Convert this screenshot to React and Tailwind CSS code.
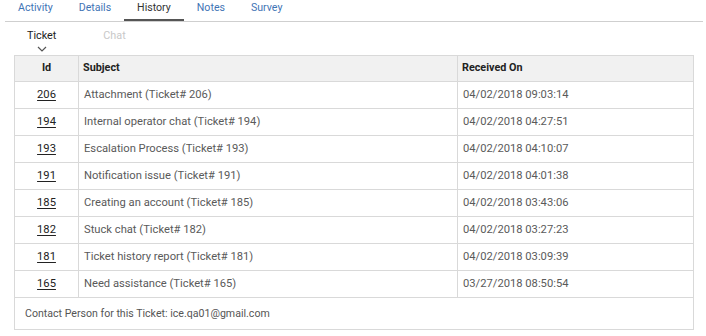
import React from 'react'

const tabs = ['Activity', 'Details', 'History', 'Notes', 'Survey'];

const rows = [
  { id: '206', subject: 'Attachment (Ticket# 206)', received: '04/02/2018 09:03:14' },
  { id: '194', subject: 'Internal operator chat (Ticket# 194)', received: '04/02/2018 04:27:51' },
  { id: '193', subject: 'Escalation Process (Ticket# 193)', received: '04/02/2018 04:10:07' },
  { id: '191', subject: 'Notification issue (Ticket# 191)', received: '04/02/2018 04:01:38' },
  { id: '185', subject: 'Creating an account (Ticket# 185)', received: '04/02/2018 03:43:06' },
  { id: '182', subject: 'Stuck chat (Ticket# 182)', received: '04/02/2018 03:27:23' },
  { id: '181', subject: 'Ticket history report (Ticket# 181)', received: '04/02/2018 03:09:39' },
  { id: '165', subject: 'Need assistance (Ticket# 165)', received: '03/27/2018 08:50:54' },
];

function App() {
  return (
    <div className="w-[706px] h-[336px] bg-white font-['Roboto',sans-serif] overflow-hidden">
      <div className="ml-[5px] mr-[3px] flex border-b border-[#cfcfcf]">
        {tabs.map((tab) => {
          const active = tab === 'History';
          return (
            <div
              key={tab}
              className={`h-[21px] px-[13px] text-[10.6px] leading-[16px] ${active ? 'border-b-2 border-[#555] text-[#333]' : 'text-[#3f74b5]'}`}
            >
              {tab}
            </div>
          );
        })}
      </div>

      <div className="flex h-[33px] text-[10.8px] leading-[14px]">
        <div className="ml-[27px] mt-[7px] flex flex-col items-center text-[#222]">
          <span>Ticket</span>
          <svg width="10" height="6" viewBox="0 0 10 6" className="mt-[3px]">
            <path d="M1 1 L5 5 L9 1" fill="none" stroke="#555" strokeWidth="1.2" />
          </svg>
        </div>
        <div className="ml-[47px] mt-[7px] text-[#c8c8c8]">Chat</div>
      </div>

      <table className="ml-[14px] w-[680px] border-collapse table-fixed text-[11.2px]">
        <colgroup>
          <col className="w-[64px]" />
          <col className="w-[379px]" />
          <col />
        </colgroup>
        <thead>
          <tr className="h-[26px] bg-[#f1f1f1] text-[10.8px] font-bold text-[#222]">
            <th className="border border-[#d9d9d9] text-center">Id</th>
            <th className="border-y border-[#d9d9d9] pl-[4px] text-left">Subject</th>
            <th className="border border-[#d9d9d9] pl-[4px] text-left">Received On</th>
          </tr>
        </thead>
        <tbody>
          {rows.map((row) => (
            <tr key={row.id} className="h-[27px] text-[#5a5a5a]">
              <td className="border border-[#d9d9d9] text-center">
                <a href="#" className="text-[#222] underline underline-offset-2">{row.id}</a>
              </td>
              <td className="border border-[#d9d9d9] pl-[5px]">{row.subject}</td>
              <td className="border border-[#d9d9d9] pl-[5px]">{row.received}</td>
            </tr>
          ))}
          <tr className="h-[32px]">
            <td colSpan={3} className="border border-[#d9d9d9] pl-[10px] text-[10.6px] text-[#555]">
              Contact Person for this Ticket: ice.qa01@gmail.com
            </td>
          </tr>
        </tbody>
      </table>
    </div>
  )
}

export default App
